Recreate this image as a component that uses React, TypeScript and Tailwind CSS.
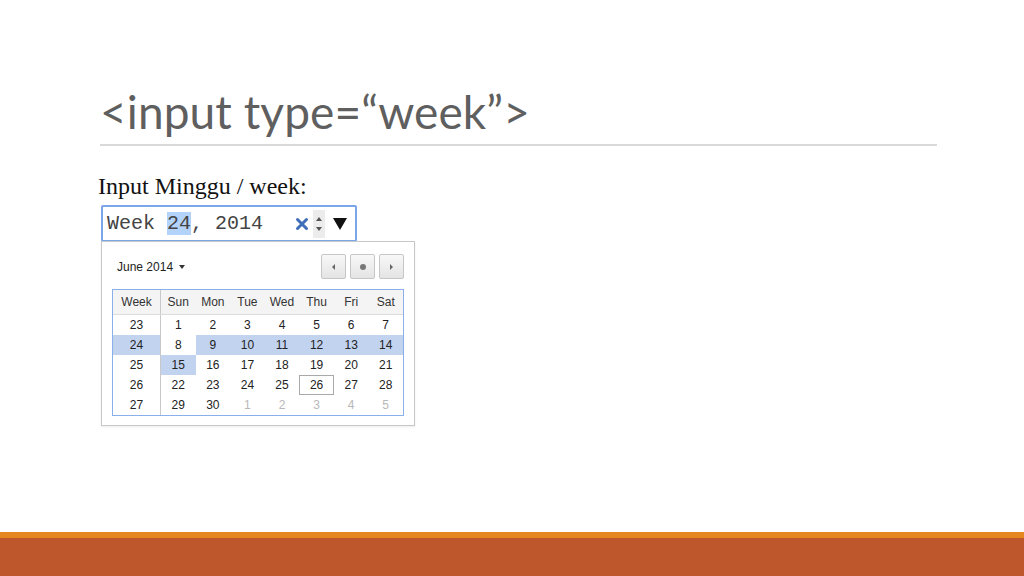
import React from 'react';

const DAYS = ['Sun', 'Mon', 'Tue', 'Wed', 'Thu', 'Fri', 'Sat'];

// Each row: week number, then 7 days. `o` = next month, `s` = selected week, `t` = today.
type Cell = { d: number; s?: boolean; o?: boolean; t?: boolean };
const ROWS: { w: number; sel?: boolean; days: Cell[] }[] = [
  { w: 23, days: [1, 2, 3, 4, 5, 6, 7].map((d) => ({ d })) },
  {
    w: 24,
    sel: true,
    days: [{ d: 8 }, ...[9, 10, 11, 12, 13, 14].map((d) => ({ d, s: true }))],
  },
  {
    w: 25,
    days: [{ d: 15, s: true }, ...[16, 17, 18, 19, 20, 21].map((d) => ({ d }))],
  },
  {
    w: 26,
    days: [22, 23, 24, 25, 26, 27, 28].map((d) => ({ d, t: d === 26 })),
  },
  {
    w: 27,
    days: [{ d: 29 }, { d: 30 }, ...[1, 2, 3, 4, 5].map((d) => ({ d, o: true }))],
  },
];

function NavButton({ children }: { children: React.ReactNode }) {
  return (
    <div className="w-[25px] h-[25px] rounded-[2px] border border-[#c6c6c6] bg-gradient-to-b from-[#f8f8f8] to-[#e4e4e4] flex items-center justify-center">
      {children}
    </div>
  );
}

function Calendar() {
  return (
    <div
      className="w-[314px] border border-[#c8c8c8] bg-white pt-[12px] pb-[9px] px-[10px] shadow-[0_1px_2px_rgba(0,0,0,0.08)]"
      style={{ fontFamily: '"Liberation Sans", Arial, sans-serif' }}
    >
      <div className="flex items-center justify-between h-[25px] pl-[5px]">
        <div className="flex items-center text-[12px] text-[#222]">
          June 2014
          <span className="ml-[6px] w-0 h-0 border-l-[3.5px] border-r-[3.5px] border-t-[4px] border-l-transparent border-r-transparent border-t-[#333]" />
        </div>
        <div className="flex gap-[4px]">
          <NavButton>
            <span className="w-0 h-0 border-t-[3px] border-b-[3px] border-r-[3px] border-t-transparent border-b-transparent border-r-[#666]" />
          </NavButton>
          <NavButton>
            <span className="w-[6px] h-[6px] rounded-full bg-[#777]" />
          </NavButton>
          <NavButton>
            <span className="w-0 h-0 border-t-[3px] border-b-[3px] border-l-[3px] border-t-transparent border-b-transparent border-l-[#666]" />
          </NavButton>
        </div>
      </div>

      <div className="mt-[10px] border border-[#8ab0ec] text-[12px] text-[#222]">
        <div className="grid grid-cols-[48px_repeat(7,1fr)] h-[25px] bg-[#f4f4f4] border-b border-[#dcdcdc]">
          <div className="flex items-center justify-center border-r border-[#c9c9c9] text-[#333]">Week</div>
          {DAYS.map((d) => (
            <div key={d} className="flex items-center justify-center text-[#333]">
              {d}
            </div>
          ))}
        </div>
        {ROWS.map((r) => (
          <div key={r.w} className="grid grid-cols-[48px_repeat(7,1fr)] h-[20px]">
            <div
              className={`flex items-center justify-center border-r border-[#c9c9c9] ${r.sel ? 'bg-[#c2d3f0]' : ''}`}
            >
              {r.w}
            </div>
            {r.days.map((c, i) => (
              <div
                key={i}
                className={`flex items-center justify-center ${c.s ? 'bg-[#c2d3f0]' : ''} ${c.o ? 'text-[#b8b8b8]' : ''} ${c.t ? 'border border-[#a9a9a9]' : ''}`}
              >
                {c.d}
              </div>
            ))}
          </div>
        ))}
      </div>
    </div>
  );
}

export default function App() {
  return (
    <div className="w-[1024px] h-[576px] bg-white flex flex-col overflow-hidden">
      <div className="flex-1 flex flex-col pl-[100px] pt-[82px]">
        <h1
          className="text-[46px] leading-[60px] font-normal text-[#5f5f5f] tracking-[0.1px]"
          style={{ fontFamily: 'Lato, "Open Sans", sans-serif' }}
        >
          &lt;input type=“week”&gt;
        </h1>
        <div className="mt-[2px] w-[837px] h-[2px] bg-[#d9d9d9]" />

        <div
          className="mt-[27px] -ml-[2px] text-[24px] leading-[26px] text-[#111]"
          style={{ fontFamily: '"Liberation Serif", "Times New Roman", serif' }}
        >
          Input Minggu / week:
        </div>

        <div className="mt-[6px] ml-[1px] w-[256px] h-[37px] border-2 border-[#7ba6e8] rounded-[2px] flex items-center pl-[4px] pr-[4px]">
          <span
            className="text-[20px] text-[#444] whitespace-pre flex-1"
            style={{ fontFamily: '"Liberation Mono", "Courier New", monospace' }}
          >
            Week <span className="bg-[#b4d3fb]">24</span>, 2014
          </span>
          <svg width="14" height="14" viewBox="0 0 14 14" className="mr-[4px]">
            <path d="M2.5 2.5 L11.5 11.5 M11.5 2.5 L2.5 11.5" stroke="#3f6fb8" strokeWidth="3" strokeLinecap="round" />
          </svg>
          <div className="w-[12px] h-[28px] bg-[#ececec] flex flex-col items-center justify-center gap-[6px]">
            <span className="w-0 h-0 border-l-[3px] border-r-[3px] border-b-[4px] border-l-transparent border-r-transparent border-b-[#555]" />
            <span className="w-0 h-0 border-l-[3px] border-r-[3px] border-t-[4px] border-l-transparent border-r-transparent border-t-[#555]" />
          </div>
          <span className="ml-[8px] mr-[4px] w-0 h-0 border-l-[7px] border-r-[7px] border-t-[12px] border-l-transparent border-r-transparent border-t-[#111]" />
        </div>

        <div className="ml-[1px] -mt-[1px]">
          <Calendar />
        </div>
      </div>
      <div className="h-[6px] bg-[#e3871e]" />
      <div className="h-[38px] bg-[#be582c]" />
    </div>
  );
}
